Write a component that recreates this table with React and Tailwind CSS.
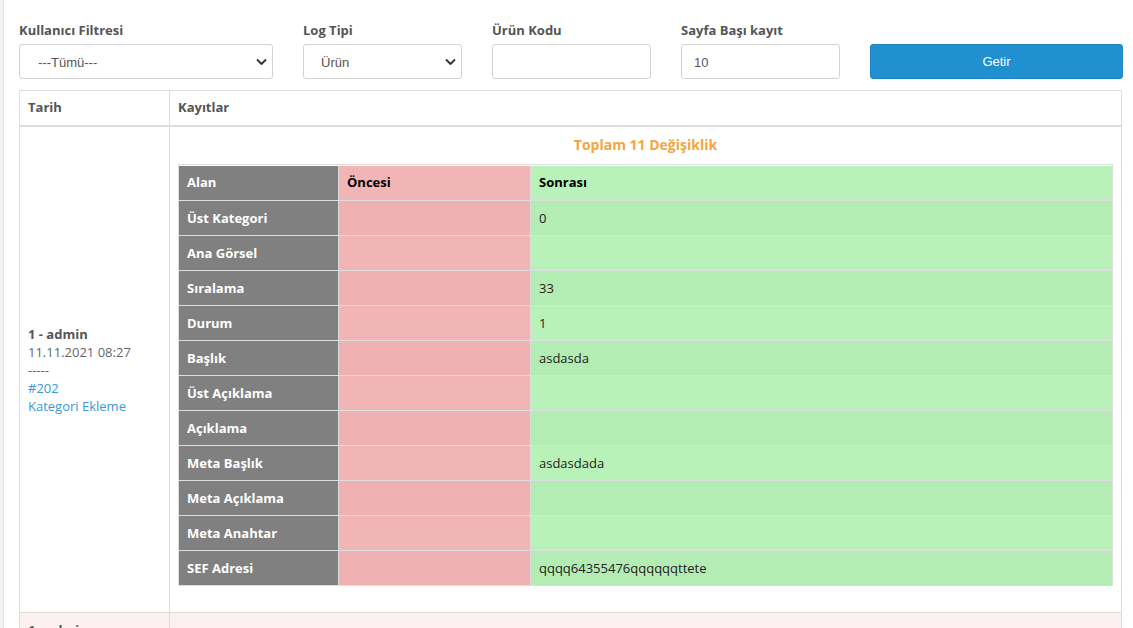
import { useState } from 'react'

const rows = [
  { field: 'Üst Kategori', before: '', after: '0' },
  { field: 'Ana Görsel', before: '', after: '' },
  { field: 'Sıralama', before: '', after: '33' },
  { field: 'Durum', before: '', after: '1' },
  { field: 'Başlık', before: '', after: 'asdasda' },
  { field: 'Üst Açıklama', before: '', after: '' },
  { field: 'Açıklama', before: '', after: '' },
  { field: 'Meta Başlık', before: '', after: 'asdasdada' },
  { field: 'Meta Açıklama', before: '', after: '' },
  { field: 'Meta Anahtar', before: '', after: '' },
  { field: 'SEF Adresi', before: '', after: 'qqqq64355476qqqqqqttete' },
]

function Chevron() {
  return (
    <svg className="pointer-events-none absolute right-[6px] top-1/2 -translate-y-1/2" width="11" height="8" viewBox="0 0 11 8" fill="none">
      <path d="M1.5 2l4 4 4-4" stroke="#333" strokeWidth="1.8" strokeLinecap="round" strokeLinejoin="round" />
    </svg>
  )
}

function Field({ label, children }) {
  return (
    <div>
      <label className="mb-[5px] block h-[18px] text-[13px] font-bold leading-[18px] text-[#555]">{label}</label>
      {children}
    </div>
  )
}

const inputCls =
  "h-[35px] w-full rounded-[3px] border border-[#d2d2d2] bg-white px-3 pt-[2px] font-['Liberation_Sans',Arial,sans-serif] text-[13px] text-[#555] outline-none"

export default function App() {
  const [user, setUser] = useState('')
  const [logType, setLogType] = useState('urun')
  const [code, setCode] = useState('')
  const [perPage, setPerPage] = useState('10')

  return (
    <div className="flex h-[628px] overflow-hidden bg-white font-['Open_Sans',sans-serif]">
      <div className="w-[4px] shrink-0 border-r border-[#e2e2e2] bg-[#f4f4f4]" />

      <div className="flex-1 pl-[15px] pr-[10px] pt-[21px]">
        <div className="grid grid-cols-[254px_159px_159px_159px_253px] gap-x-[30px]">
          <Field label="Kullanıcı Filtresi">
            <div className="relative">
              <select value={user} onChange={(e) => setUser(e.target.value)} className={`${inputCls} appearance-none pl-[18px]`}>
                <option value="">---Tümü---</option>
                <option value="1">admin</option>
              </select>
              <Chevron />
            </div>
          </Field>
          <Field label="Log Tipi">
            <div className="relative">
              <select value={logType} onChange={(e) => setLogType(e.target.value)} className={`${inputCls} appearance-none pl-[17px]`}>
                <option value="urun">Ürün</option>
                <option value="kategori">Kategori</option>
              </select>
              <Chevron />
            </div>
          </Field>
          <Field label="Ürün Kodu">
            <input type="text" value={code} onChange={(e) => setCode(e.target.value)} className={inputCls} />
          </Field>
          <Field label="Sayfa Başı kayıt">
            <input type="text" value={perPage} onChange={(e) => setPerPage(e.target.value)} className={inputCls} />
          </Field>
          <div className="pt-[23px]">
            <button className="h-[35px] w-full rounded-[3px] border border-[#1c84c2] bg-[#2090d0] pt-[1px] font-['Liberation_Sans',Arial,sans-serif] text-[13px] text-white">
              Getir
            </button>
          </div>
        </div>

        <div className="mt-[11px] mr-[1px] border border-[#dddddd] text-[13px]">
          {/* head */}
          <div className="flex h-[36px] border-b-2 border-[#dddddd] font-bold text-[#555]">
            <div className="flex w-[150px] items-center border-r border-[#dddddd] pl-[8px]">Tarih</div>
            <div className="flex flex-1 items-center pl-[8px]">Kayıtlar</div>
          </div>

          {/* first record */}
          <div className="flex">
            <div className="flex w-[150px] flex-col justify-center border-r border-[#dddddd] pl-[8px] leading-[18px]">
              <span className="font-bold text-[#555]">1 - admin</span>
              <span className="text-[#666]">11.11.2021 08:27</span>
              <span className="text-[#666]">-----</span>
              <a href="#" className="text-[#3b97d6]">#202</a>
              <a href="#" className="text-[#3b97d6]">Kategori Ekleme</a>
            </div>
            <div className="flex-1 px-[8px] pt-[8px] pb-[8px]">
              <div className="mb-[9px] text-center text-[14px] font-bold leading-[20px] text-[#f2a541]">Toplam 11 Değişiklik</div>
              <div className="mb-[18px] border border-[#dddddd]">
                <div className="grid h-[35px] grid-cols-[159px_192px_1fr] pt-[1px] font-bold">
                  <div className="flex items-center bg-[#808080] pl-[8px] text-white">Alan</div>
                  <div className="flex items-center border-l border-[#dddddd] bg-[#f2b5b5] pl-[8px] text-black">Öncesi</div>
                  <div className="flex items-center border-l border-[#dddddd] bg-[#b9f2b9] pl-[8px] text-black">Sonrası</div>
                </div>
                {rows.map((r, i) => (
                  <div key={r.field} className="grid h-[35px] grid-cols-[159px_192px_1fr] border-t border-[#dddddd]">
                    <div className="flex items-center bg-[#808080] pl-[8px] pt-[2px] font-bold text-white">{r.field}</div>
                    <div className={`flex items-center border-l border-[#dddddd] pl-[8px] pt-[2px] text-[#222] ${i % 2 === 0 ? 'bg-[#efb1b1]' : 'bg-[#f2b5b5]'}`}>{r.before}</div>
                    <div className={`flex items-center border-l border-[#dddddd] pl-[8px] pt-[2px] text-[#222] ${i % 2 === 0 ? 'bg-[#b3edb3]' : 'bg-[#b9f2b9]'}`}>{r.after}</div>
                  </div>
                ))}
              </div>
            </div>
          </div>

          {/* next record, cut off by the viewport */}
          <div className="flex border-t border-[#dddddd] bg-[#fdf0f0]">
            <div className="w-[150px] border-r border-[#dddddd] pl-[8px] pt-[8px] leading-[18px]">
              <span className="font-bold text-[#555]">1 - admin</span>
              <div className="text-[#666]">11.11.2021 08:27</div>
            </div>
            <div className="h-[120px] flex-1" />
          </div>
        </div>
      </div>
    </div>
  )
}
